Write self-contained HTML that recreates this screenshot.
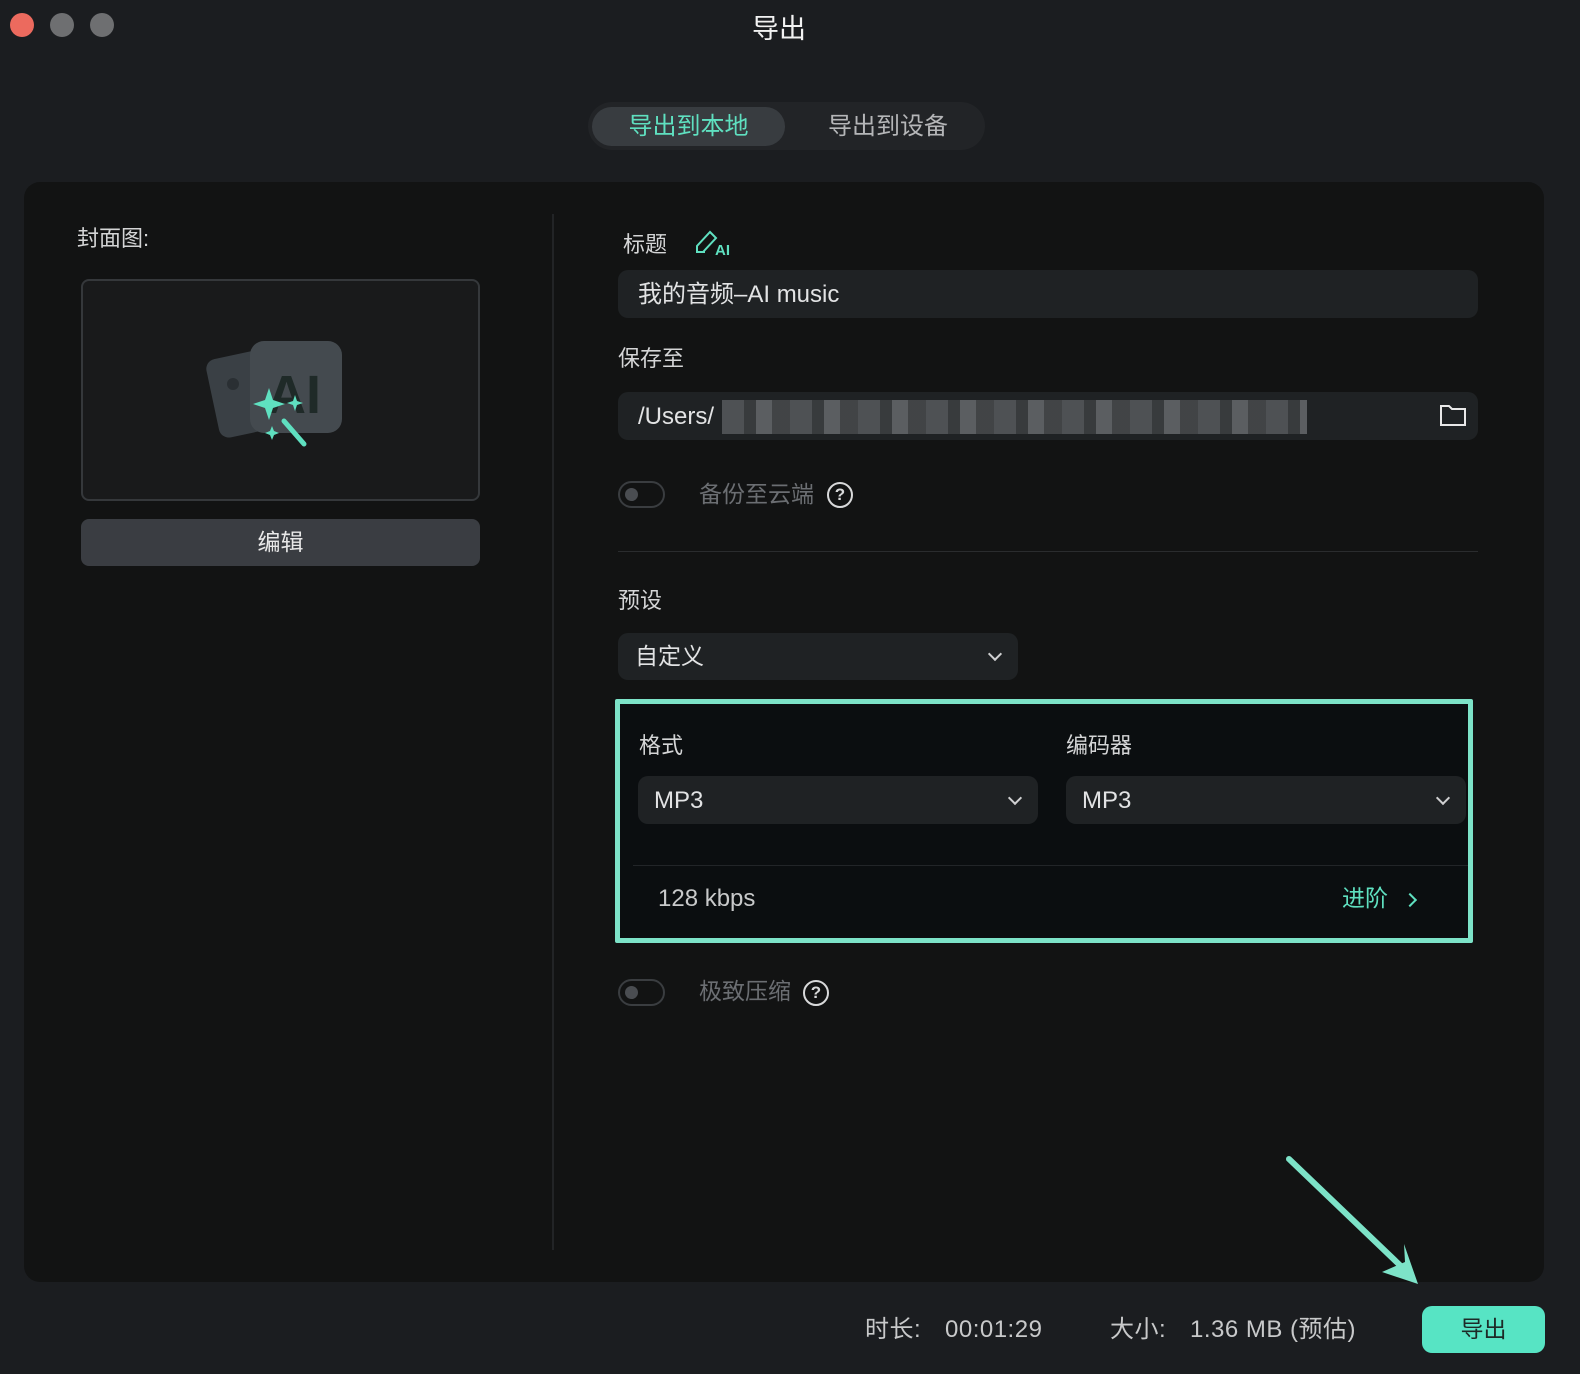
<!DOCTYPE html>
<html><head><meta charset="utf-8"><style>
*{margin:0;padding:0;box-sizing:border-box}
body{width:1580px;height:1374px;background:#1b1d20;font-family:"Liberation Sans","Noto Sans CJK SC",sans-serif;position:relative;overflow:hidden;color:#d8d9da}
.a{position:absolute;line-height:1}
.dot{position:absolute;top:13px;width:24px;height:24px;border-radius:50%}
.lbl{position:absolute;font-size:22px;color:#d4d5d6;line-height:1}
.inp{position:absolute;background:#1f2224;border-radius:10px}
.chev{position:absolute;width:10px;height:10px;border-right:2px solid #cfd0d1;border-bottom:2px solid #cfd0d1;transform:rotate(45deg)}
.tog{position:absolute;width:47px;height:27px;border:2px solid #3a3d40;border-radius:14px}
.tog:after{content:"";position:absolute;left:5px;top:5px;width:13px;height:13px;border-radius:50%;background:#4a4d51}
.q{position:absolute;width:26px;height:26px;border:2px solid #d8d9da;border-radius:50%;font-size:17px;text-align:center;line-height:22px;color:#d8d9da;font-weight:bold}
.bt{position:absolute;font-size:24px;color:#c8c9ca;line-height:1;letter-spacing:0.5px}
</style></head><body>
<div class="dot" style="left:10px;background:#ec6a5e"></div>
<div class="dot" style="left:50px;background:#6e6f71"></div>
<div class="dot" style="left:90px;background:#6e6f71"></div>
<div class="a" style="left:0;width:1558px;top:16px;text-align:center;font-size:27px;color:#f2f2f2">导出</div>

<div class="a" style="left:588px;top:102px;width:397px;height:48px;border-radius:24px;background:#222427"></div>
<div class="a" style="left:592px;top:107px;width:193px;height:39px;border-radius:20px;background:#383c40;color:#5fe0c0;font-size:24px;text-align:center;line-height:39px">导出到本地</div>
<div class="a" style="left:793px;top:107px;width:190px;height:39px;color:#b5b6b8;font-size:24px;text-align:center;line-height:39px">导出到设备</div>

<div class="a" style="left:24px;top:182px;width:1520px;height:1100px;background:#121313;border-radius:16px"></div>
<div class="a" style="left:552px;top:214px;width:2px;height:1036px;background:#222426"></div>

<div class="lbl" style="left:77px;top:228px">封面图:</div>
<div class="a" style="left:81px;top:279px;width:399px;height:222px;border:2px solid #35383b;border-radius:8px;background:#191a1b"></div>
<svg class="a" style="left:200px;top:335px" width="150" height="125" viewBox="0 0 150 125">
<rect x="12" y="18" width="70" height="80" rx="10" fill="#3a4045" transform="rotate(-12 47 58)"/>
<circle cx="33" cy="49" r="6" fill="#2a2f33"/>
<rect x="50" y="6" width="92" height="92" rx="14" fill="#444a4f"/>
<text x="67" y="78" font-family="Liberation Sans" font-weight="bold" font-size="54" fill="#1f2a28">AI</text>
<path d="M69 53 L73 65 L85 69 L73 73 L69 85 L65 73 L53 69 L65 65Z" fill="#5fe0c0"/>
<path d="M95 60 L97 66 L103 68 L97 70 L95 76 L93 70 L87 68 L93 66Z" fill="#5fe0c0"/>
<path d="M72 91 L74 96 L79 98 L74 100 L72 105 L70 100 L65 98 L70 96Z" fill="#5fe0c0"/>
<line x1="84" y1="86" x2="104" y2="109" stroke="#5fe0c0" stroke-width="5" stroke-linecap="round"/>
</svg>
<div class="a" style="left:81px;top:519px;width:399px;height:47px;border-radius:8px;background:#3a3d42;text-align:center;line-height:47px;font-size:23px;color:#e8e8e8">编辑</div>

<div class="lbl" style="left:623px;top:234px">标题</div>
<svg class="a" style="left:693px;top:228px" width="42" height="30" viewBox="0 0 42 30"><path d="M4 24 L4 18 L17 4 L23 10 L10 24 Z M4 24 L12 24" fill="none" stroke="#5fe0c0" stroke-width="2"/><text x="22" y="27" font-family="Liberation Sans" font-size="15" font-weight="bold" fill="#5fe0c0">AI</text></svg>
<div class="inp" style="left:618px;top:270px;width:860px;height:48px"></div>
<div class="a" style="left:638px;top:283px;font-size:24px;color:#e2e3e4">我的音频–AI music</div>

<div class="lbl" style="left:618px;top:348px">保存至</div>
<div class="inp" style="left:618px;top:392px;width:860px;height:48px"></div>
<div class="a" style="left:638px;top:405px;font-size:24px;color:#e2e3e4">/Users/</div>
<div class="a" style="left:722px;top:400px;width:585px;height:34px;background:repeating-linear-gradient(90deg,#5a5d60 0 22px,#3e4143 22px 34px,#6a6d70 34px 50px,#4a4d4f 50px 68px);opacity:.8"></div>
<svg class="a" style="left:1439px;top:403px" width="28" height="24" viewBox="0 0 28 24"><path d="M2 3 H10 L13 6 H26 V22 H2 Z" fill="none" stroke="#e8e8e8" stroke-width="2"/></svg>

<div class="tog" style="left:618px;top:481px"></div>
<div class="a" style="left:699px;top:483px;font-size:23px;color:#6b6e72">备份至云端</div>
<div class="q" style="left:827px;top:482px">?</div>

<div class="a" style="left:618px;top:551px;width:860px;height:1px;background:#2a2c2e"></div>
<div class="lbl" style="left:618px;top:590px">预设</div>
<div class="inp" style="left:618px;top:633px;width:400px;height:47px"></div>
<div class="a" style="left:635px;top:645px;font-size:23px;color:#e2e3e4">自定义</div>
<div class="chev" style="left:990px;top:649px"></div>

<div class="a" style="left:615px;top:699px;width:858px;height:244px;border:5px solid #7de3c8;background:#0b0e10;border-radius:2px"></div>
<div class="lbl" style="left:639px;top:735px">格式</div>
<div class="lbl" style="left:1066px;top:735px">编码器</div>
<div class="inp" style="left:638px;top:776px;width:400px;height:48px"></div>
<div class="a" style="left:654px;top:789px;font-size:24px;color:#e2e3e4">MP3</div>
<div class="chev" style="left:1010px;top:793px"></div>
<div class="inp" style="left:1066px;top:776px;width:400px;height:48px"></div>
<div class="a" style="left:1082px;top:789px;font-size:24px;color:#e2e3e4">MP3</div>
<div class="chev" style="left:1438px;top:793px"></div>
<div class="a" style="left:633px;top:865px;width:835px;height:1px;background:#222528"></div>
<div class="a" style="left:658px;top:887px;font-size:24px;color:#c8c9ca">128 kbps</div>
<div class="a" style="left:1342px;top:887px;font-size:23px;color:#5fe0c0">进阶</div>
<div class="a" style="left:1405px;top:895px;width:10px;height:10px;border-right:2px solid #5fe0c0;border-top:2px solid #5fe0c0;transform:rotate(45deg)"></div>

<div class="tog" style="left:618px;top:979px"></div>
<div class="a" style="left:699px;top:980px;font-size:23px;color:#6b6e72">极致压缩</div>
<div class="q" style="left:803px;top:980px">?</div>

<svg class="a" style="left:0;top:0" width="1580" height="1374"><line x1="1289" y1="1159" x2="1405" y2="1270" stroke="#7de3c8" stroke-width="6" stroke-linecap="round"/><path d="M1418 1284 L1382 1272 L1405 1262 L1404 1244 Z" fill="#7de3c8"/></svg>

<div class="bt" style="left:865px;top:1318px">时长:</div>
<div class="bt" style="left:945px;top:1318px">00:01:29</div>
<div class="bt" style="left:1110px;top:1318px">大小:</div>
<div class="bt" style="left:1190px;top:1318px">1.36 MB (预估)</div>
<div class="a" style="left:1422px;top:1306px;width:123px;height:47px;border-radius:10px;background:#57e4c4;text-align:center;line-height:47px;font-size:23px;color:#1d2a27">导出</div>
</body></html>
